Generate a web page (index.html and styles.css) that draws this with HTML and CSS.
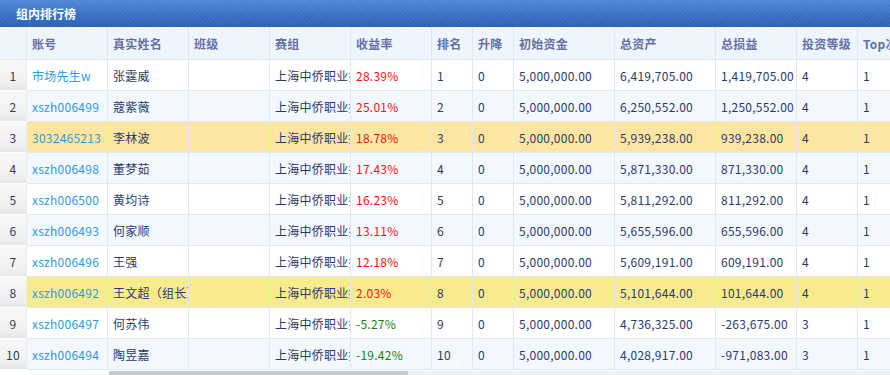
FILE: index.html
```html
<!DOCTYPE html>
<html lang="zh-CN">
<head>
<meta charset="utf-8">
<title>组内排行榜</title>
<link rel="stylesheet" href="styles.css">
</head>
<body>
<div class="panel">
  <div class="panel-title">组内排行榜</div>
  <div class="grid">
    <div class="row head">
      <div class="c num"></div>
      <div class="c">账号</div>
      <div class="c">真实姓名</div>
      <div class="c">班级</div>
      <div class="c">赛组</div>
      <div class="c">收益率</div>
      <div class="c">排名</div>
      <div class="c">升降</div>
      <div class="c">初始资金</div>
      <div class="c">总资产</div>
      <div class="c">总损益</div>
      <div class="c">投资等级</div>
      <div class="c">Top次数</div>
    </div>
    <div class="row">
      <div class="c num">1</div><div class="c link">市场先生w</div><div class="c">张霆威</div><div class="c"></div><div class="c">上海中侨职业技术学院</div><div class="c up">28.39%</div><div class="c">1</div><div class="c">0</div><div class="c">5,000,000.00</div><div class="c">6,419,705.00</div><div class="c">1,419,705.00</div><div class="c">4</div><div class="c">1</div>
    </div>
    <div class="row alt">
      <div class="c num">2</div><div class="c link">xszh006499</div><div class="c">蔻紫薇</div><div class="c"></div><div class="c">上海中侨职业技术学院</div><div class="c up">25.01%</div><div class="c">2</div><div class="c">0</div><div class="c">5,000,000.00</div><div class="c">6,250,552.00</div><div class="c">1,250,552.00</div><div class="c">4</div><div class="c">1</div>
    </div>
    <div class="row mark-orange">
      <div class="c num">3</div><div class="c link">3032465213</div><div class="c">李林波</div><div class="c"></div><div class="c">上海中侨职业技术学院</div><div class="c up">18.78%</div><div class="c">3</div><div class="c">0</div><div class="c">5,000,000.00</div><div class="c">5,939,238.00</div><div class="c">939,238.00</div><div class="c">4</div><div class="c">1</div>
    </div>
    <div class="row alt">
      <div class="c num">4</div><div class="c link">xszh006498</div><div class="c">董梦茹</div><div class="c"></div><div class="c">上海中侨职业技术学院</div><div class="c up">17.43%</div><div class="c">4</div><div class="c">0</div><div class="c">5,000,000.00</div><div class="c">5,871,330.00</div><div class="c">871,330.00</div><div class="c">4</div><div class="c">1</div>
    </div>
    <div class="row">
      <div class="c num">5</div><div class="c link">xszh006500</div><div class="c">黄均诗</div><div class="c"></div><div class="c">上海中侨职业技术学院</div><div class="c up">16.23%</div><div class="c">5</div><div class="c">0</div><div class="c">5,000,000.00</div><div class="c">5,811,292.00</div><div class="c">811,292.00</div><div class="c">4</div><div class="c">1</div>
    </div>
    <div class="row alt">
      <div class="c num">6</div><div class="c link">xszh006493</div><div class="c">何家顺</div><div class="c"></div><div class="c">上海中侨职业技术学院</div><div class="c up">13.11%</div><div class="c">6</div><div class="c">0</div><div class="c">5,000,000.00</div><div class="c">5,655,596.00</div><div class="c">655,596.00</div><div class="c">4</div><div class="c">1</div>
    </div>
    <div class="row">
      <div class="c num">7</div><div class="c link">xszh006496</div><div class="c">王强</div><div class="c"></div><div class="c">上海中侨职业技术学院</div><div class="c up">12.18%</div><div class="c">7</div><div class="c">0</div><div class="c">5,000,000.00</div><div class="c">5,609,191.00</div><div class="c">609,191.00</div><div class="c">4</div><div class="c">1</div>
    </div>
    <div class="row mark-yellow">
      <div class="c num">8</div><div class="c link">xszh006492</div><div class="c">王文超（组长）</div><div class="c"></div><div class="c">上海中侨职业技术学院</div><div class="c up">2.03%</div><div class="c">8</div><div class="c">0</div><div class="c">5,000,000.00</div><div class="c">5,101,644.00</div><div class="c">101,644.00</div><div class="c">4</div><div class="c">1</div>
    </div>
    <div class="row">
      <div class="c num">9</div><div class="c link">xszh006497</div><div class="c">何苏伟</div><div class="c"></div><div class="c">上海中侨职业技术学院</div><div class="c down">-5.27%</div><div class="c">9</div><div class="c">0</div><div class="c">5,000,000.00</div><div class="c">4,736,325.00</div><div class="c">-263,675.00</div><div class="c">3</div><div class="c">1</div>
    </div>
    <div class="row alt">
      <div class="c num">10</div><div class="c link">xszh006494</div><div class="c">陶昱嘉</div><div class="c"></div><div class="c">上海中侨职业技术学院</div><div class="c down">-19.42%</div><div class="c">10</div><div class="c">0</div><div class="c">5,000,000.00</div><div class="c">4,028,917.00</div><div class="c">-971,083.00</div><div class="c">3</div><div class="c">1</div>
    </div>
  </div>
  <div class="scrollbar">
    <div class="scroll-gap"></div>
    <div class="scroll-thumb"></div>
  </div>
</div>
</body>
</html>
```

FILE: styles.css
```css
html, body {
  margin: 0;
  padding: 0;
  background: #ffffff;
}

body {
  font-family: "Noto Sans CJK SC", "Noto Sans", sans-serif;
  font-size: 12px;
  color: #2b3a6e;
  overflow: hidden;
}

.panel {
  width: 890px;
  height: 375px;
  overflow: hidden;
}

.panel-title {
  height: 27px;
  line-height: 27px;
  padding-left: 16px;
  color: #ffffff;
  font-weight: bold;
  font-size: 12px;
  background:
    repeating-linear-gradient(45deg, rgba(255,255,255,0.05) 0 1px, rgba(0,0,0,0) 1px 3px),
    linear-gradient(#5289d6, #3a70c4 55%, #2d60b5);
}

.grid {
  width: 960px;
}

.row {
  display: grid;
  grid-template-columns: 27px 81px 81px 81px 81px 81px 41px 41px 101px 101px 81px 61px 81px;
  height: 31px;
  background: #ffffff;
}

.row.alt {
  background: #f3f8fe;
}

.row.mark-orange {
  background: #fee6a2;
}

.row.mark-yellow {
  background: #f8eb8e;
}

.row.head {
  height: 33px;
  background: #eef5fd;
  color: #6570a8;
  font-weight: bold;
}

.c {
  box-sizing: border-box;
  border-right: 1px solid #dce9f6;
  border-bottom: 1px solid #dce9f6;
  padding: 0 4px 0 5px;
  display: flex;
  align-items: center;
  white-space: nowrap;
  overflow: hidden;
  letter-spacing: 0.25px;
}

.c.num {
  justify-content: center;
  padding: 0;
  color: #333c5e;
  background: linear-gradient(#f8f8f8, #f1f1f1 70%, #e7e7e7);
  border-bottom: 1px solid #ffffff;
  border-right: 1px solid #e4ecf4;
}

.head .c.num {
  background: #eef5fd;
  border-bottom: 1px solid #dce9f6;
}

.link {
  color: #2e9ae2;
}

.up {
  color: #ff1010;
}

.down {
  color: #18800e;
}

.scrollbar {
  display: flex;
  height: 4px;
  margin-top: 1px;
  background: #f1f1f1;
}

.scroll-gap {
  width: 109px;
  background: #ffffff;
}

.scroll-thumb {
  width: 299px;
  background: #c9c9c9;
}
```
